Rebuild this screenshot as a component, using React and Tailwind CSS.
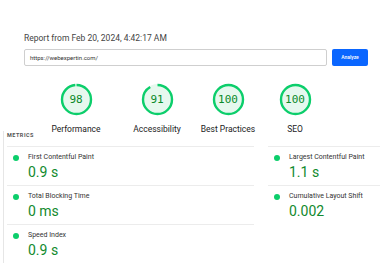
import React from "react";

function Gauge({ score, label, ml }) {
  const r = 14.5;
  const c = 2 * Math.PI * r;
  const len = (score / 100) * c;
  return (
    <div className={`flex w-[60px] flex-col items-center ${ml}`}>
      <div className="relative h-[33px] w-[33px]">
        <svg width="33" height="33" viewBox="0 0 33 33" className="absolute inset-0">
          <circle cx="16.5" cy="16.5" r="15.5" fill="#e6f8ee" />
          <circle
            cx="16.5"
            cy="16.5"
            r={r}
            fill="none"
            stroke="#0cce6b"
            strokeWidth="2.4"
            strokeDasharray={`${len} ${c}`}
            transform="rotate(-90 16.5 16.5)"
          />
        </svg>
        <div className="absolute inset-0 flex items-center justify-center font-['DejaVu_Sans_Mono',monospace] text-[11px] leading-none text-[#0a8a2a]">
          {score}
        </div>
      </div>
      <div className="mt-[8px] whitespace-nowrap text-[8.5px] leading-[10px] text-[#222]">{label}</div>
    </div>
  );
}

function Metric({ title, value }) {
  return (
    <div className="flex h-[39px] border-t border-[#ececec] pl-[6px]">
      <div className="mt-[8px] h-[6px] w-[6px] rounded-full bg-[#0cce6b]" />
      <div className="ml-[9px] flex flex-col pt-[6px]">
        <div className="text-[7px] leading-[9px] text-[#333]">{title}</div>
        <div className="mt-[2px] text-[14px] leading-[16px] text-[#128a2e]">{value}</div>
      </div>
    </div>
  );
}

export default function App() {
  return (
    <div className="h-[265px] w-[380px] overflow-hidden bg-white font-['Roboto',sans-serif]">
      <div className="pl-[24px] pr-[12px] pt-[32px]">
        <div className="whitespace-nowrap text-[8.5px] leading-[12px] text-[#444]">
          Report from Feb 20, 2024, 4:42:17 AM
        </div>
        <div className="mt-[5px] flex items-center">
          <div className="flex h-[17px] w-[303px] shrink-0 items-center rounded-[2px] border border-[#cfcfcf] px-[5px] text-[6px] text-[#333]">
            https://webexpertin.com/
          </div>
          <div className="ml-[5px] flex h-[17px] w-[36px] shrink-0 items-center justify-center rounded-[2px] bg-[#0a66ff] text-[5px] font-medium text-white">
            Analyze
          </div>
        </div>
      </div>
      <div className="mt-[17px] flex">
        <Gauge score={98} label="Performance" ml="ml-[46px]" />
        <Gauge score={91} label="Accessibility" ml="ml-[21px]" />
        <Gauge score={100} label="Best Practices" ml="ml-[11px]" />
        <Gauge score={100} label="SEO" ml="ml-[7px]" />
      </div>
      <div className="ml-[3px] mt-[-3px] border-l border-[#e6e6e6] pl-[3px]">
        <div className="mb-[7px] text-[5.5px] font-bold leading-[8px] tracking-[0.5px] text-[#555]">METRICS</div>
        <div className="flex">
          <div className="w-[247px]">
            <Metric title="First Contentful Paint" value="0.9 s" />
            <Metric title="Total Blocking Time" value="0 ms" />
            <Metric title="Speed Index" value="0.9 s" />
          </div>
          <div className="ml-[14px] flex-1">
            <Metric title="Largest Contentful Paint" value="1.1 s" />
            <Metric title="Cumulative Layout Shift" value="0.002" />
          </div>
        </div>
      </div>
    </div>
  );
}
